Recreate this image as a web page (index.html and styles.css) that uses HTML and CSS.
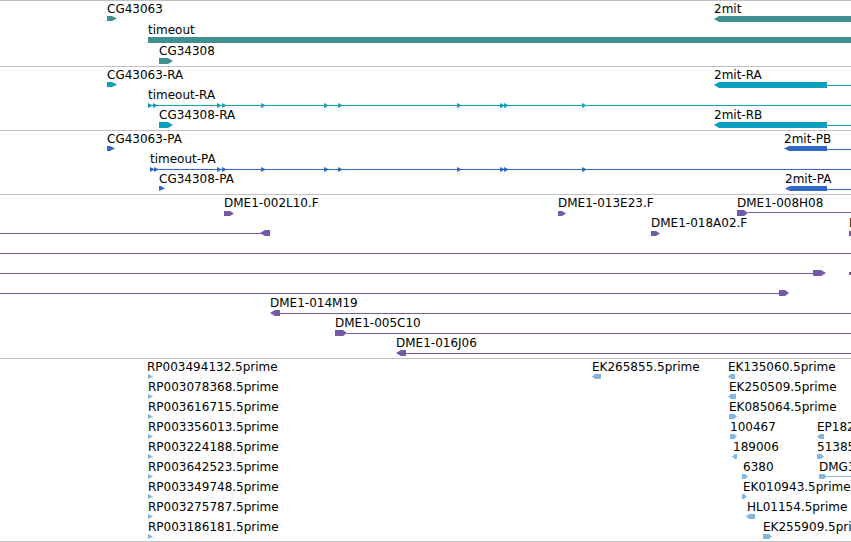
FILE: index.html
```html
<!DOCTYPE html>
<html lang="en">
<head>
  <meta charset="UTF-8" />
  <title>Track view</title>
  <link rel="stylesheet" href="styles.css">
</head>
<body>
  <div class="browser">

    <!-- genes -->
    <div class="track track-genes">
      <svg class="canvas" viewBox="0 1 851 65" width="851" height="65">
        <text x="107" y="13">CG43063</text>
        <polygon points="107,16 112,16 117,18.5 112,21 107,21" />
        <text x="148" y="34">timeout</text>
        <rect x="148" y="37" width="703" height="6" />
        <text x="159" y="55">CG34308</text>
        <polygon points="159,58 168,58 173,61 168,64 159,64" />
        <text x="714" y="13">2mit</text>
        <polygon points="714,19 719,16 851,16 851,22 719,22" />
      </svg>
    </div>

    <!-- transcripts -->
    <div class="track track-rna">
      <svg class="canvas" viewBox="0 67 851 63" width="851" height="63">
        <text x="107" y="79">CG43063-RA</text>
        <polygon points="107,82 112,82 117,84.5 112,87 107,87" />
        <text x="148" y="99">timeout-RA</text>
        <rect x="148" y="105" width="703" height="1" />
        <polygon points="148,103 153,105.5 148,108" />
        <polygon points="153,103 158,105.5 153,108" />
        <polygon points="217,103 222,105.5 217,108" />
        <polygon points="222,103 227,105.5 222,108" />
        <polygon points="261,103 266,105.5 261,108" />
        <polygon points="324,103 329,105.5 324,108" />
        <polygon points="338,103 343,105.5 338,108" />
        <polygon points="457,103 462,105.5 457,108" />
        <polygon points="500,103 505,105.5 500,108" />
        <polygon points="504,103 509,105.5 504,108" />
        <polygon points="582,103 587,105.5 582,108" />
        <text x="159" y="119">CG34308-RA</text>
        <polygon points="159,122 168,122 173,125 168,128 159,128" />
        <text x="714" y="79">2mit-RA</text>
        <polygon points="714,85 719,82 827,82 827,88 719,88" />
        <rect x="827" y="85" width="24" height="1" />
        <text x="714" y="119">2mit-RB</text>
        <polygon points="714,125 719,122 827,122 827,128 719,128" />
        <rect x="827" y="125" width="24" height="1" />
      </svg>
    </div>

    <!-- proteins -->
    <div class="track track-pep">
      <svg class="canvas" viewBox="0 131 851 63" width="851" height="63">
        <text x="107" y="143">CG43063-PA</text>
        <polygon points="107,146 110,146 115,148.5 110,151 107,151" />
        <text x="150" y="163">timeout-PA</text>
        <rect x="150" y="169" width="701" height="1" />
        <polygon points="150,167 155,169.5 150,172" />
        <polygon points="154,167 159,169.5 154,172" />
        <polygon points="217,167 222,169.5 217,172" />
        <polygon points="222,167 227,169.5 222,172" />
        <polygon points="261,167 266,169.5 261,172" />
        <polygon points="324,167 329,169.5 324,172" />
        <polygon points="338,167 343,169.5 338,172" />
        <polygon points="457,167 462,169.5 457,172" />
        <polygon points="500,167 505,169.5 500,172" />
        <polygon points="504,167 509,169.5 504,172" />
        <polygon points="582,167 587,169.5 582,172" />
        <text x="159" y="183">CG34308-PA</text>
        <polygon points="159,186 161,186 165,188.5 159,191" />
        <text x="784" y="143">2mit-PB</text>
        <polygon points="784,148.5 789,146 827,146 827,151 789,151" />
        <rect x="827" y="149" width="24" height="1" />
        <text x="785" y="183">2mit-PA</text>
        <polygon points="785,188.5 790,186 827,186 827,191 790,191" />
        <rect x="827" y="189" width="24" height="1" />
      </svg>
    </div>

    <!-- BAC ends -->
    <div class="track track-bac">
      <svg class="canvas" viewBox="0 195 851 163" width="851" height="163">
        <text x="224" y="207">DME1-002L10.F</text>
        <polygon points="224,211 230,211 234,213.5 230,216 224,216" />
        <text x="558" y="207">DME1-013E23.F</text>
        <polygon points="558,211 562,211 566,213.5 562,216 558,216" />
        <text x="737" y="207">DME1-008H08</text>
        <polygon points="737,210 744,210 748,213 744,216 737,216" />
        <rect x="748" y="212" width="103" height="1" />

        <text x="651" y="227">DME1-018A02.F</text>
        <polygon points="651,231 656,231 660,233.5 656,236 651,236" />
        <text x="849" y="227">D</text>
        <rect x="849" y="231" width="2" height="5" />
        <rect x="0" y="233" width="262" height="1" />
        <polygon points="260,233 265,230 270,230 270,236 265,236" />

        <rect x="0" y="253" width="851" height="1" />

        <rect x="0" y="273" width="815" height="1" />
        <polygon points="813,270 821,270 826,273 821,276 813,276" />
        <rect x="849" y="272" width="2" height="3" />

        <rect x="0" y="293" width="781" height="1" />
        <polygon points="779,290 785,290 789,293 785,296 779,296" />

        <text x="270" y="307">DME1-014M19</text>
        <polygon points="270,313 275,310 280,310 280,316 275,316" />
        <rect x="280" y="313" width="571" height="1" />

        <text x="335" y="327">DME1-005C10</text>
        <polygon points="335,330 343,330 347,333 343,336 335,336" />
        <rect x="347" y="333" width="504" height="1" />

        <text x="396" y="347">DME1-016J06</text>
        <polygon points="396,353 401,350 406,350 406,356 401,356" />
        <rect x="406" y="353" width="445" height="1" />
      </svg>
    </div>

    <!-- ESTs -->
    <div class="track track-est">
      <svg class="canvas" viewBox="0 359 851 182" width="851" height="182">
        <text x="147" y="371">RP003494132.5prime</text>
        <polygon points="148,374 153,376.5 148,379" />
        <text x="148" y="391">RP003078368.5prime</text>
        <polygon points="148,394 153,396.5 148,399" />
        <text x="148" y="411">RP003616715.5prime</text>
        <polygon points="148,414 153,416.5 148,419" />
        <text x="148" y="431">RP003356013.5prime</text>
        <polygon points="148,434 153,436.5 148,439" />
        <text x="148" y="451">RP003224188.5prime</text>
        <polygon points="148,454 153,456.5 148,459" />
        <text x="148" y="471">RP003642523.5prime</text>
        <polygon points="148,474 153,476.5 148,479" />
        <text x="148" y="491">RP003349748.5prime</text>
        <polygon points="148,494 153,496.5 148,499" />
        <text x="148" y="511">RP003275787.5prime</text>
        <polygon points="148,514 153,516.5 148,519" />
        <text x="148" y="531">RP003186181.5prime</text>
        <polygon points="148,534 153,536.5 148,539" />

        <text x="592" y="371">EK265855.5prime</text>
        <polygon points="592,376.5 595,374 601,374 601,379 595,379" />

        <text x="728" y="371">EK135060.5prime</text>
        <polygon points="728,376.5 731,374 735,374 735,379 731,379" />
        <text x="729" y="391">EK250509.5prime</text>
        <polygon points="728,396.5 731,394 736,394 736,399 731,399" />
        <text x="729" y="411">EK085064.5prime</text>
        <polygon points="729,414 734,414 737,416.5 734,419 729,419" />
        <text x="730" y="431">100467</text>
        <polygon points="730,434 734,434 737,436.5 734,439 730,439" />
        <text x="733" y="451">189006</text>
        <polygon points="732,456.5 735,454 737,454 737,459 735,459" />
        <text x="743" y="471">6380</text>
        <polygon points="742,474 745,474 748,476.5 745,479 742,479" />
        <text x="743" y="491">EK010943.5prime</text>
        <polygon points="742,494 744,494 747,496.5 744,499 742,499" />
        <text x="747" y="511">HL01154.5prime</text>
        <polygon points="746,516.5 749,514 755,514 755,519 749,519" />
        <text x="763" y="531">EK255909.5prime</text>
        <polygon points="763,534 769,534 772,536.5 769,539 763,539" />

        <text x="817" y="431">EP182</text>
        <polygon points="817,436.5 820,434 824,434 824,439 820,439" />
        <text x="817" y="451">51385</text>
        <polygon points="817,454 821,454 824,456.5 821,459 817,459" />
        <text x="819" y="471">DMG3</text>
        <polygon points="819,474 824,474 827,476.5 824,479 819,479" />
        <rect x="827" y="476" width="24" height="1" />
      </svg>
    </div>

  </div>
</body>
</html>
```

FILE: styles.css
```css
* {
  margin: 0;
  padding: 0;
  box-sizing: content-box;
}

body {
  background: #ffffff;
  font-family: 'DejaVu Sans', 'Liberation Sans', sans-serif;
}

.browser {
  width: 851px;
  border-top: 1px solid #c0c0c0;
}

.track {
  border-bottom: 1px solid #c0c0c0;
  overflow: hidden;
}

.track-genes { height: 65px; }
.track-rna   { height: 63px; }
.track-pep   { height: 63px; }
.track-bac   { height: 163px; }
.track-est   { height: 182px; }

.canvas {
  display: block;
}

.canvas text {
  font-family: 'DejaVu Sans', sans-serif;
  font-size: 12px;
  fill: #000000;
}

.track-genes polygon,
.track-genes rect {
  fill: #3f8f8f;
}

.track-rna polygon,
.track-rna rect {
  fill: #0a9fbf;
}

.track-pep polygon,
.track-pep rect {
  fill: #3068c8;
}

.track-bac polygon,
.track-bac rect {
  fill: #7459a8;
}

.track-est polygon,
.track-est rect {
  fill: #80b6e0;
}
```
